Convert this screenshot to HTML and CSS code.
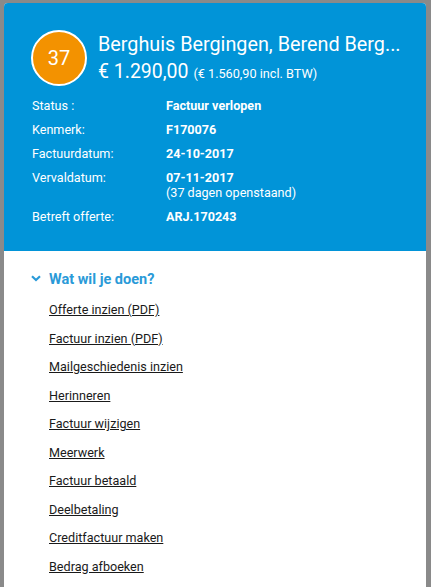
FILE: index.html
```html
<!DOCTYPE html>
<html lang="nl">
<head>
    <meta charset="UTF-8">
    <meta name="viewport" content="width=device-width, initial-scale=1.0">
    <title>Factuur F170076</title>
    <link rel="stylesheet" href="styles.css">
</head>
<body>
    <div class="popup">
        <div class="popup-head">
            <div class="kop">
                <div class="badge">37</div>
                <div class="kop-tekst">
                    <div class="klant">Berghuis Bergingen, Berend Berg...</div>
                    <div class="bedrag">€ 1.290,00 <span class="btw">(€ 1.560,90 incl. BTW)</span></div>
                </div>
            </div>

            <table class="gegevens">
                <tr>
                    <td>Status :</td>
                    <td class="waarde">Factuur verlopen</td>
                </tr>
                <tr>
                    <td>Kenmerk:</td>
                    <td class="waarde">F170076</td>
                </tr>
                <tr>
                    <td>Factuurdatum:</td>
                    <td class="waarde">24-10-2017</td>
                </tr>
                <tr>
                    <td>Vervaldatum:</td>
                    <td class="waarde">07-11-2017<br><span class="sub">(37 dagen openstaand)</span></td>
                </tr>
                <tr>
                    <td>Betreft offerte:</td>
                    <td class="waarde">ARJ.170243</td>
                </tr>
            </table>
        </div>

        <div class="popup-body">
            <div class="acties-kop">
                <svg class="chevron" width="10" height="7" viewBox="0 0 10 7">
                    <path d="M1 1.2 L5 5 L9 1.2" fill="none" stroke="#2a9ad8" stroke-width="2.2"/>
                </svg>
                <span>Wat wil je doen?</span>
            </div>
            <ul class="acties">
                <li><a href="#">Offerte inzien (PDF)</a></li>
                <li><a href="#">Factuur inzien (PDF)</a></li>
                <li><a href="#">Mailgeschiedenis inzien</a></li>
                <li><a href="#">Herinneren</a></li>
                <li><a href="#">Factuur wijzigen</a></li>
                <li><a href="#">Meerwerk</a></li>
                <li><a href="#">Factuur betaald</a></li>
                <li><a href="#">Deelbetaling</a></li>
                <li><a href="#">Creditfactuur maken</a></li>
                <li><a href="#">Bedrag afboeken</a></li>
            </ul>
        </div>
    </div>
</body>
</html>
```

FILE: styles.css
```css
body {
    margin: 0;
    background-color: #8a8a8a;
    font-family: Roboto, "Liberation Sans", sans-serif;
    height: 587px;
    overflow: hidden;
}
.popup {
    width: 422px;
    margin: 3px 0 0 4px;
    background-color: #fff;
    border-radius: 4px 4px 0 0;
    overflow: hidden;
    height: 584px;
}
.popup-head {
    background-color: #0194d8;
    color: #fff;
    padding: 27px 20px 18px 27px;
}
.kop {
    display: flex;
    align-items: flex-start;
}
.badge {
    width: 52px;
    height: 52px;
    border: 2px solid #fff;
    border-radius: 50%;
    background-color: #f39200;
    color: #fff;
    font-size: 20px;
    line-height: 52px;
    text-align: center;
    flex-shrink: 0;
}
.kop-tekst {
    margin-left: 11px;
    padding-top: 4px;
}
.klant {
    font-size: 19.8px;
    line-height: 22px;
}
.bedrag {
    font-size: 19.5px;
    line-height: 26px;
    margin-top: 3px;
}
.btw {
    font-size: 12.7px;
}
.gegevens {
    border-collapse: collapse;
    margin-top: 11px;
    margin-left: 1px;
    font-size: 12.6px;
}
.gegevens td {
    padding: 0 0 9px 0;
    line-height: 15px;
    vertical-align: top;
}
.gegevens td:first-child {
    width: 134px;
}
.waarde {
    font-weight: bold;
}
.sub {
    font-weight: normal;
}
.popup-body {
    padding: 20px 0 0 27px;
}
.acties-kop {
    display: flex;
    align-items: center;
    color: #2a9ad8;
    font-size: 14.5px;
    font-weight: bold;
}
.chevron {
    margin-right: 8px;
    margin-bottom: 3px;
}
.acties {
    list-style: none;
    margin: 14px 0 0 0;
    padding: 0 0 0 18px;
}
.acties li {
    font-size: 12.6px;
    line-height: 15px;
    margin-bottom: 13.5px;
}
.acties a {
    color: #1a1a1a;
}
```
